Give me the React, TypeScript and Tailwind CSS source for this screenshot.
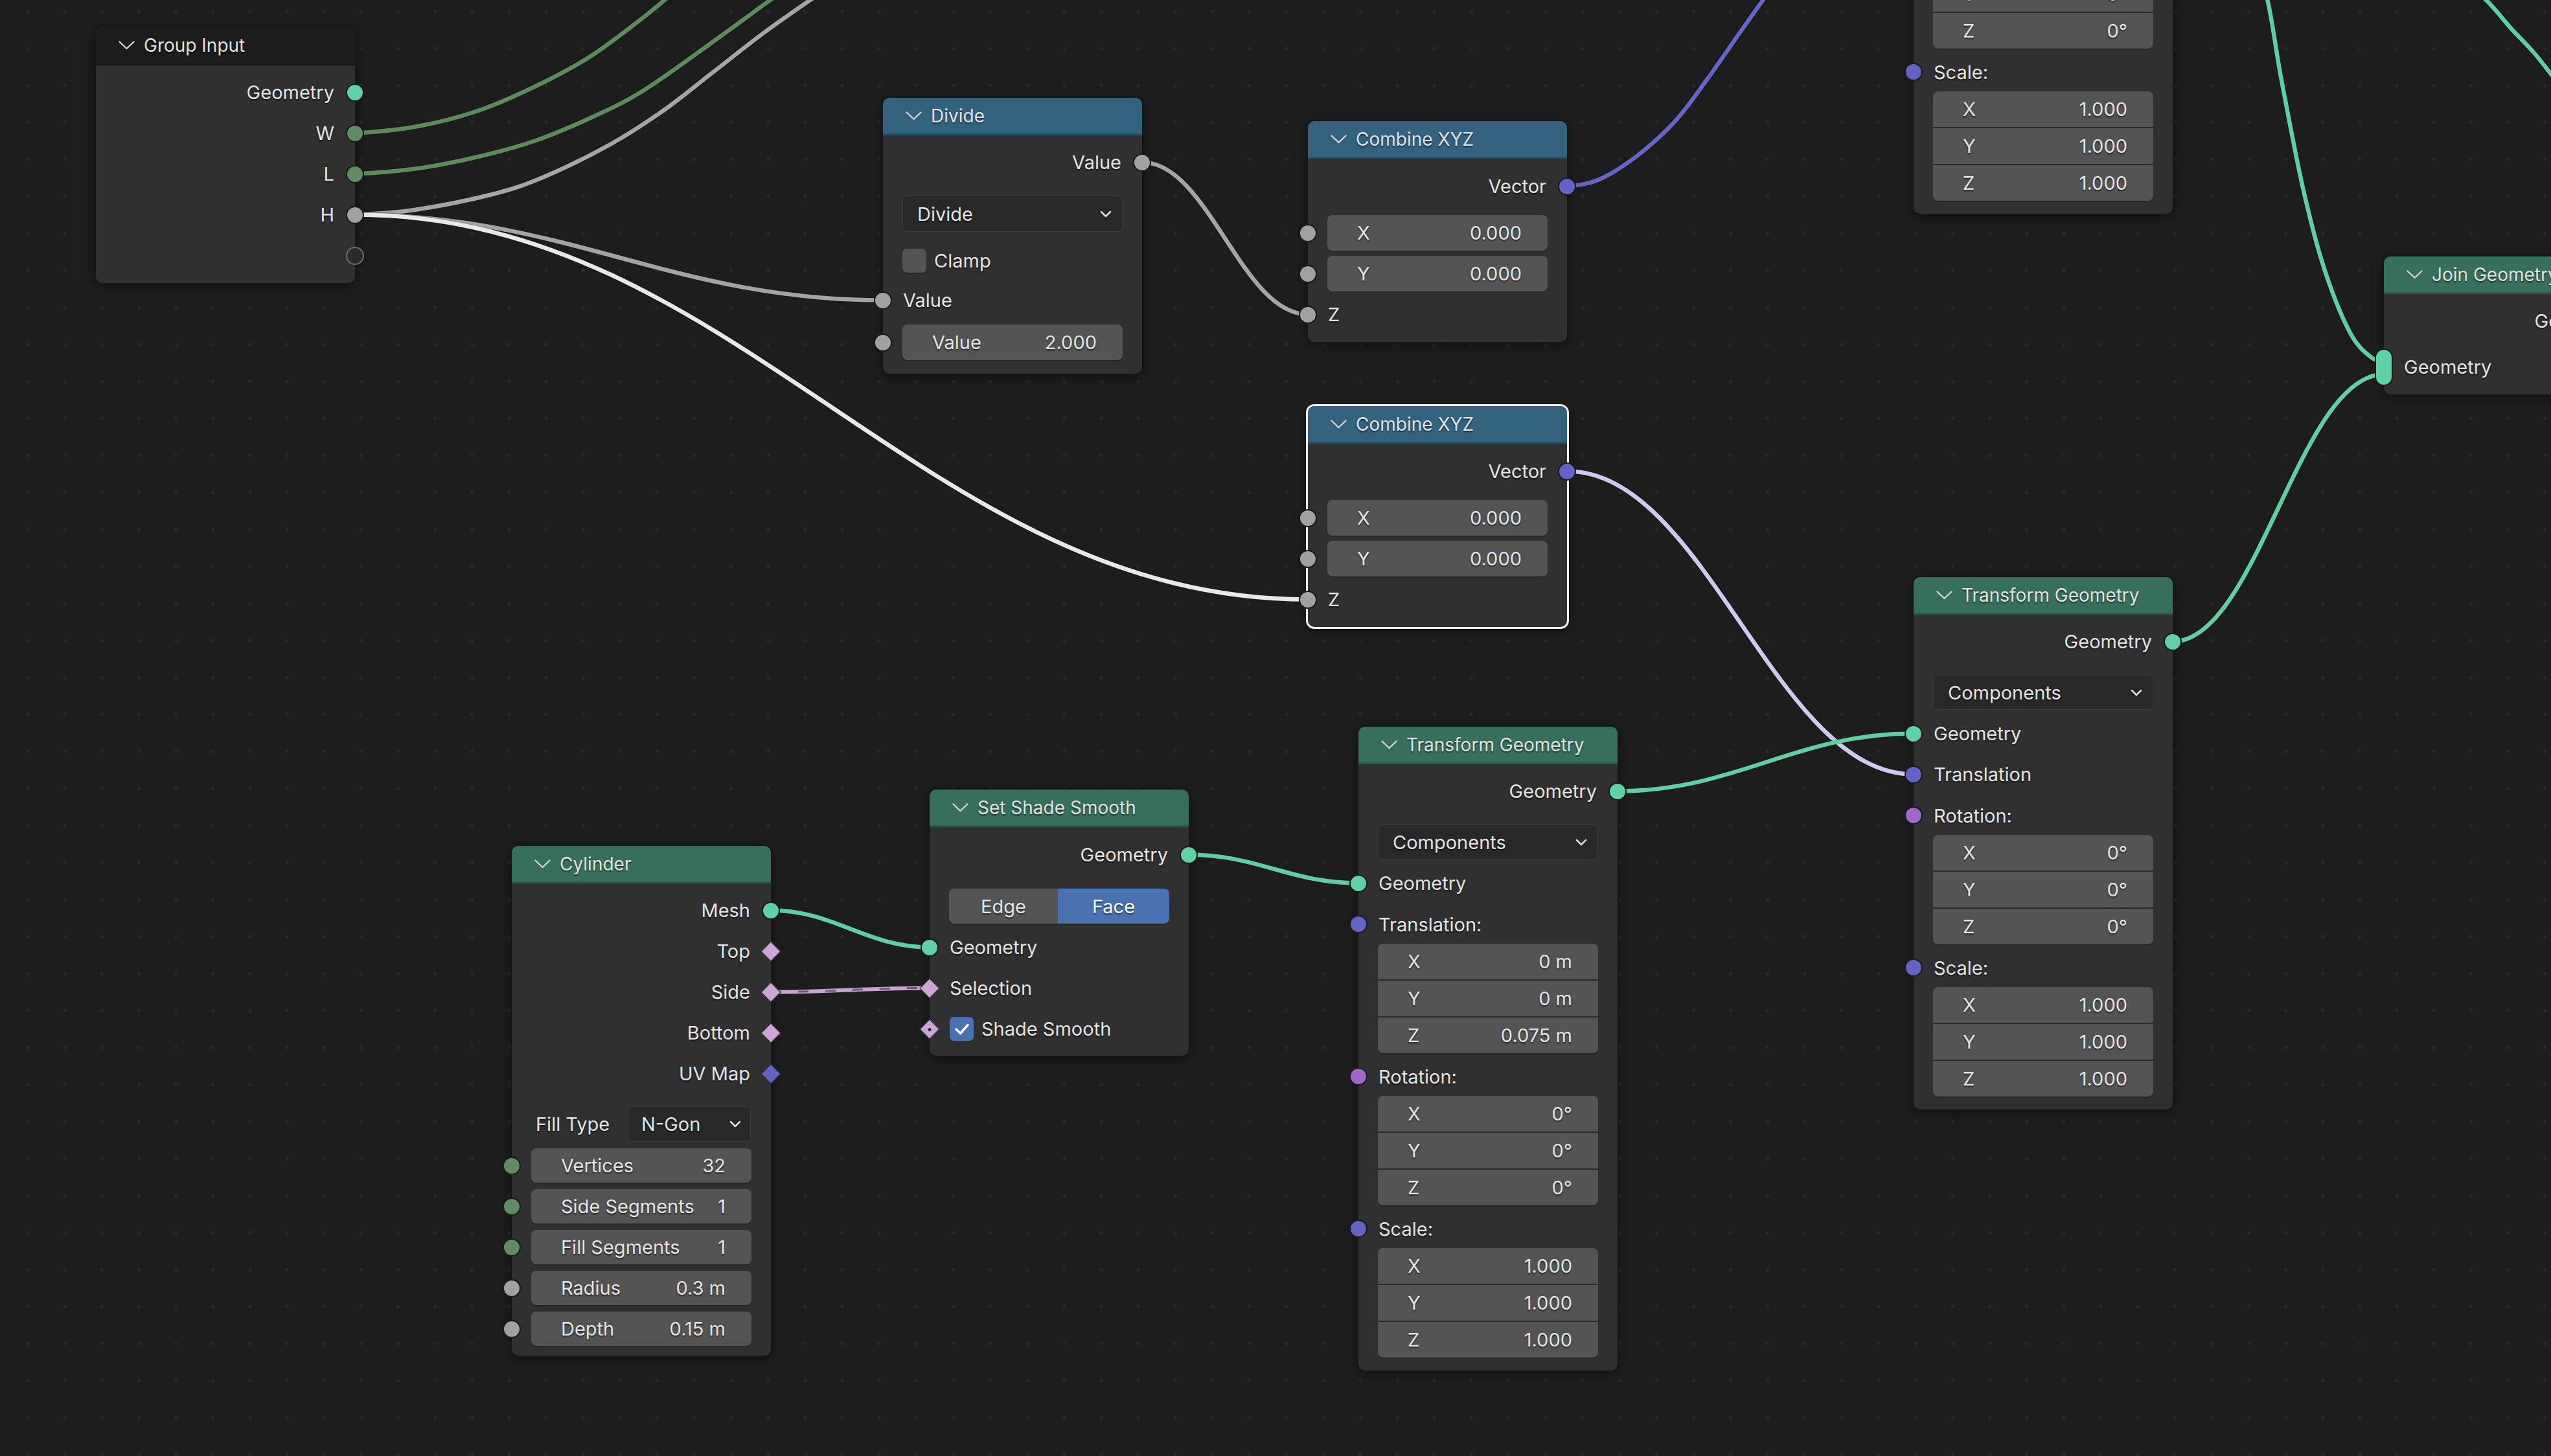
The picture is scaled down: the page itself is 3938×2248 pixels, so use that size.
import React from "react";

type ST = "geo" | "int" | "float" | "vec" | "rot" | "bool" | "boolDot" | "vecD" | "empty" | "multi";

const circleBg: Record<string, string> = {
  geo: "bg-[#5ed1a6]",
  int: "bg-[#5f8c60]",
  float: "bg-[#a1a1a1]",
  vec: "bg-[#6363c7]",
  rot: "bg-[#a066c8]",
};

function Socket({ t, side }: { t: ST; side: "l" | "r" }) {
  if (t === "bool" || t === "boolDot" || t === "vecD") {
    const pos = side === "l" ? "left-[-16px]" : "right-[-16px]";
    const bg = t === "vecD" ? "bg-[#6363c7]" : "bg-[#cca6d6]";
    return (
      <div className={`absolute ${pos} top-1/2 -translate-y-1/2 w-[32px] h-[32px] flex items-center justify-center`}>
        <div className={`w-[22px] h-[22px] rotate-45 ${bg} border-[1.5px] border-[#1a1a1a] flex items-center justify-center`}>
          {t === "boolDot" && <div className="w-[5px] h-[5px] rounded-full bg-[#2a2a2a]" />}
        </div>
      </div>
    );
  }
  if (t === "multi") {
    return (
      <div className="absolute left-[-14px] top-1/2 -translate-y-1/2 w-[28px] h-[58px] rounded-full bg-[#5ed1a6] border-[2.5px] border-[#1a1a1a]" />
    );
  }
  const pos = side === "l" ? "left-[-14px]" : "right-[-14px]";
  if (t === "empty") {
    return (
      <div className={`absolute ${pos} top-1/2 -translate-y-1/2 w-[28px] h-[28px] rounded-full bg-[#2a2a2a] border-[2.5px] border-[#6a6a6a]`} />
    );
  }
  return (
    <div className={`absolute ${pos} top-1/2 -translate-y-1/2 w-[28px] h-[28px] rounded-full ${circleBg[t]} border-[2.5px] border-[#1a1a1a]`} />
  );
}

function Chev() {
  return (
    <svg width="25" height="14" viewBox="0 0 25 14" className="shrink-0">
      <polyline points="1.5,1.5 12.5,12 23.5,1.5" fill="none" stroke="#d4d4d4" strokeWidth="2.4" strokeLinecap="round" strokeLinejoin="round" />
    </svg>
  );
}

function SmallChev() {
  return (
    <svg width="18" height="11" viewBox="0 0 18 11" className="shrink-0">
      <polyline points="2,2 9,9 16,2" fill="none" stroke="#dcdcdc" strokeWidth="2.5" strokeLinecap="round" strokeLinejoin="round" />
    </svg>
  );
}

function Node({
  pos,
  title,
  head,
  sel,
  headH = "h-[58px]",
  bodyCls = "",
  children,
}: {
  pos: string;
  title: string;
  head: "blue" | "green" | "dark";
  sel?: boolean;
  headH?: string;
  bodyCls?: string;
  children: React.ReactNode;
}) {
  const headCls =
    head === "blue"
      ? "bg-[#33627f] border-[#284f67]"
      : head === "green"
      ? "bg-[#376f5d] border-[#2b5a4b]"
      : "bg-[#1c1c1c] border-[#151515]";
  const shadow = sel
    ? "shadow-[0_0_0_3px_#f0f0f0,0_4px_18px_rgba(0,0,0,0.55)]"
    : "shadow-[0_0_0_2px_#161616,0_4px_18px_rgba(0,0,0,0.5)]";
  return (
    <div className={`absolute w-[400px] ${pos} rounded-[10px] bg-[#303030] ${shadow}`}>
      <div className={`${headH} rounded-t-[10px] border-b-[3px] ${headCls} flex items-center pl-[35px] gap-[14px] text-[28px] text-[#e2e2e2]`}>
        <Chev />
        <span className="whitespace-nowrap">{title}</span>
      </div>
      <div className={`flex flex-col ${bodyCls}`}>{children}</div>
    </div>
  );
}

function Out({ label, t, cls = "" }: { label: string; t: ST; cls?: string }) {
  return (
    <div className={`relative h-[63px] flex items-center justify-end pr-[32px] ${cls}`}>
      <span className="whitespace-nowrap">{label}</span>
      <Socket t={t} side="r" />
    </div>
  );
}

function In({ label, t, h = "h-[63px]", cls = "" }: { label: string; t: ST; h?: string; cls?: string }) {
  return (
    <div className={`relative ${h} flex items-center pl-[31px] ${cls}`}>
      <span className="whitespace-nowrap">{label}</span>
      <Socket t={t} side="l" />
    </div>
  );
}

function Field({
  label,
  value,
  t,
  rowH = "h-[63px]",
  fH = "h-[54px]",
  cls = "",
}: {
  label: string;
  value: string;
  t?: ST;
  rowH?: string;
  fH?: string;
  cls?: string;
}) {
  return (
    <div className={`relative ${rowH} flex items-center pl-[30px] pr-[30px] ${cls}`}>
      {t && <Socket t={t} side="l" />}
      <div className={`flex-1 ${fH} rounded-[8px] bg-[#545454] shadow-[0_2px_0_#262626] flex items-center justify-between pl-[46px] pr-[40px]`}>
        <span className="whitespace-nowrap">{label}</span>
        <span className="whitespace-nowrap">{value}</span>
      </div>
    </div>
  );
}

function Vec({ vals }: { vals: string[] }) {
  const axes = ["X", "Y", "Z"];
  return (
    <div className="mx-[30px] flex flex-col gap-[2px] rounded-[8px] overflow-hidden bg-[#2a2a2a] shadow-[0_2px_0_#262626]">
      {axes.map((a, i) => (
        <div key={a} className="h-[55px] bg-[#545454] flex items-center justify-between pl-[46px] pr-[40px]">
          <span>{a}</span>
          <span className="whitespace-nowrap">{vals[i]}</span>
        </div>
      ))}
    </div>
  );
}

function Drop({ label, cls }: { label: string; cls: string }) {
  return (
    <div className={`mx-[30px] ${cls} rounded-[8px] bg-[#282828] border-[1.5px] border-[#3b3b3b] flex items-center justify-between pl-[22px] pr-[16px]`}>
      <span>{label}</span>
      <SmallChev />
    </div>
  );
}

function TransformNode({ pos, connectedTranslation, trans }: { pos: string; connectedTranslation: boolean; trans?: string[] }) {
  return (
    <Node pos={pos} title="Transform Geometry" head="green" bodyCls="pt-[10px] pb-[20px]">
      <Out label="Geometry" t="geo" />
      <Drop label="Components" cls="mt-[20px] h-[54px]" />
      <In label="Geometry" t="geo" cls="mt-[5px]" />
      {connectedTranslation ? (
        <In label="Translation" t="vec" />
      ) : (
        <>
          <In label="Translation:" t="vec" h="h-[60px]" cls="mt-[2px]" />
          <Vec vals={trans || ["0 m", "0 m", "0 m"]} />
        </>
      )}
      <In label="Rotation:" t="rot" h="h-[60px]" cls={connectedTranslation ? "mt-[2px]" : "mt-[6px]"} />
      <Vec vals={["0°", "0°", "0°"]} />
      <In label="Scale:" t="vec" h="h-[60px]" cls="mt-[6px]" />
      <Vec vals={["1.000", "1.000", "1.000"]} />
    </Node>
  );
}

function bz(x0: number, y0: number, x1: number, y1: number, f = 0.4) {
  const d = Math.abs(x1 - x0) * f;
  return `M${x0} ${y0} C${x0 + d} ${y0} ${x1 - d} ${y1} ${x1} ${y1}`;
}

function cr(pts: number[][]) {
  let d = `M${pts[0][0]} ${pts[0][1]}`;
  for (let i = 0; i < pts.length - 1; i++) {
    const p1 = pts[i];
    const p2 = pts[i + 1];
    const p0 = i === 0 ? [p1[0] - (p2[0] - p1[0]), p1[1]] : pts[i - 1];
    const p3 = pts[i + 2] || p2;
    const c1 = [p1[0] + (p2[0] - p0[0]) / 6, p1[1] + (p2[1] - p0[1]) / 6];
    const c2 = [p2[0] - (p3[0] - p1[0]) / 6, p2[1] - (p3[1] - p1[1]) / 6];
    d += ` C${c1[0]} ${c1[1]} ${c2[0]} ${c2[1]} ${p2[0]} ${p2[1]}`;
  }
  return d;
}

const TEAL = "#5dcfa3";

const wires: { d: string; c: string }[] = [
  { d: cr([[548, 205.5], [645, 195], [738, 171], [827, 133], [910, 88], [993, 27], [1040, -12]]), c: "#5d8a5c" },
  { d: cr([[548, 268.5], [645, 260], [738, 242], [827, 217], [916, 180], [993, 140], [1100, 65], [1200, -8]]), c: "#5d8a5c" },
  { d: cr([[548, 331.5], [640, 324], [760, 300], [840, 273], [942, 223], [1025, 170], [1100, 112], [1180, 50], [1268, -12]]), c: "#a5a5a5" },
  { d: bz(548, 331.5, 1363, 463.5), c: "#a3a3a3" },
  { d: bz(548, 331.5, 2019, 925.5), c: "#e8e8e8" },
  { d: bz(1763, 250.5, 2019, 485.5), c: "#a5a5a5" },
  { d: cr([[2419, 287.5], [2469, 277], [2528, 240], [2586, 187], [2635, 123], [2684, 53], [2730, -12]]), c: "#6465c6" },
  { d: bz(2419, 727.5, 2954, 1195.5), c: "#cbcbef" },
  { d: bz(2497, 1221.5, 2954, 1132.5), c: TEAL },
  { d: bz(3354, 990.5, 3680, 578), c: TEAL },
  { d: cr([[3497, -12], [3522, 124], [3555, 290], [3588, 415], [3628, 514], [3661, 552], [3680, 556]]), c: TEAL },
  { d: cr([[3822, -12], [3880, 48], [3913, 83], [3950, 130]]), c: TEAL },
  { d: bz(1190, 1405.5, 1435, 1462.5), c: TEAL },
  { d: bz(1835, 1319.5, 2097, 1363.5), c: TEAL },
];

export default function App() {
  return (
    <div className="relative w-[3938px] h-[2248px] overflow-hidden bg-[#1d1d1d] [background-image:radial-gradient(circle,#282828_2.4px,transparent_3px)] [background-size:57.15px_57.15px] [background-position:14.5px_-11px] [font-family:Inter,sans-serif] text-[29px] leading-none text-[#e4e4e4] [text-shadow:0_2px_2px_rgba(0,0,0,0.55)]">
      <svg className="absolute left-0 top-0" width={3938} height={2248}>
        {wires.map((w, i) => (
          <g key={i}>
            <path d={w.d} fill="none" stroke="rgba(0,0,0,0.2)" strokeWidth={8.5} strokeLinecap="round" />
            <path d={w.d} fill="none" stroke={w.c} strokeWidth={6.5} strokeLinecap="round" />
          </g>
        ))}
        <path d={bz(1190, 1531.5, 1435, 1525.5)} fill="none" stroke="#c8a5d4" strokeWidth={6} />
        <path d={bz(1190, 1531.5, 1435, 1525.5)} fill="none" stroke="#6e5a75" strokeWidth={3} strokeDasharray="16 26" />
      </svg>

      {/* Group Input */}
      <Node pos="left-[148px] top-[41px]" title="Group Input" head="dark" headH="h-[60px]" bodyCls="pt-[10px] pb-[11px]">
        <Out label="Geometry" t="geo" />
        <Out label="W" t="int" />
        <Out label="L" t="int" />
        <Out label="H" t="float" />
        <Out label="" t="empty" />
      </Node>

      {/* Divide */}
      <Node pos="left-[1363px] top-[151px]" title="Divide" head="blue" bodyCls="pt-[10px] pb-[21px]">
        <Out label="Value" t="float" />
        <Drop label="Divide" cls="mt-[20px] h-[56px]" />
        <div className="mt-[24px] h-[40px] px-[30px] flex items-center gap-[12px]">
          <div className="w-[37px] h-[37px] rounded-[7px] bg-[#545454] shadow-[0_2px_0_#262626]" />
          <span>Clamp</span>
        </div>
        <In label="Value" t="float" cls="mt-[10px]" />
        <Field label="Value" value="2.000" t="float" rowH="h-[55px]" fH="h-[55px]" cls="mt-[6px]" />
      </Node>

      {/* Combine XYZ (top) */}
      <Node pos="left-[2019px] top-[187px]" title="Combine XYZ" head="blue" bodyCls="pt-[11px] pb-[11px]">
        <Out label="Vector" t="vec" />
        <Field label="X" value="0.000" t="float" fH="h-[55px]" cls="mt-[9px]" />
        <Field label="Y" value="0.000" t="float" fH="h-[55px]" />
        <In label="Z" t="float" />
      </Node>

      {/* Combine XYZ (selected) */}
      <Node pos="left-[2019px] top-[627px]" title="Combine XYZ" head="blue" sel bodyCls="pt-[11px] pb-[11px]">
        <Out label="Vector" t="vec" />
        <Field label="X" value="0.000" t="float" fH="h-[55px]" cls="mt-[9px]" />
        <Field label="Y" value="0.000" t="float" fH="h-[55px]" />
        <In label="Z" t="float" />
      </Node>

      {/* Transform Geometry (top, mostly off-screen) */}
      <TransformNode pos="left-[2954px] top-[-492px]" connectedTranslation />

      {/* Transform Geometry (right) */}
      <TransformNode pos="left-[2954px] top-[891px]" connectedTranslation />

      {/* Transform Geometry (middle) */}
      <TransformNode pos="left-[2097px] top-[1122px]" connectedTranslation={false} trans={["0 m", "0 m", "0.075 m"]} />

      {/* Join Geometry */}
      <Node pos="left-[3680px] top-[396px]" title="Join Geometry" head="green" bodyCls="pt-[10px] pb-[11px]">
        <Out label="Geometry" t="geo" />
        <In label="Geometry" t="multi" cls="mt-[8px]" />
      </Node>

      {/* Cylinder */}
      <Node pos="left-[790px] top-[1306px]" title="Cylinder" head="green" bodyCls="pt-[10px] pb-[10px]">
        <Out label="Mesh" t="geo" />
        <Out label="Top" t="bool" />
        <Out label="Side" t="bool" />
        <Out label="Bottom" t="bool" />
        <Out label="UV Map" t="vecD" />
        <div className="mt-[19px] h-[55px] pl-[37px] pr-[31px] flex items-center justify-between">
          <span>Fill Type</span>
          <div className="w-[190px] h-[55px] rounded-[8px] bg-[#282828] border-[1.5px] border-[#3b3b3b] flex items-center justify-between pl-[20px] pr-[14px]">
            <span>N-Gon</span>
            <SmallChev />
          </div>
        </div>
        <Field label="Vertices" value="32" t="int" fH="h-[53px]" cls="mt-[5px]" />
        <Field label="Side Segments" value="1" t="int" fH="h-[53px]" />
        <Field label="Fill Segments" value="1" t="int" fH="h-[53px]" />
        <Field label="Radius" value="0.3 m" t="float" fH="h-[53px]" />
        <Field label="Depth" value="0.15 m" t="float" fH="h-[53px]" />
      </Node>

      {/* Set Shade Smooth */}
      <Node pos="left-[1435px] top-[1219px]" title="Set Shade Smooth" head="green" bodyCls="pt-[11px] pb-[10px]">
        <Out label="Geometry" t="geo" />
        <div className="mt-[21px] h-[54px] mx-[30px] flex rounded-[8px] overflow-hidden shadow-[0_2px_0_#262626]">
          <div className="w-[168px] bg-[#545454] flex items-center justify-center">Edge</div>
          <div className="flex-1 bg-[#4a72b2] flex items-center justify-center text-white">Face</div>
        </div>
        <In label="Geometry" t="geo" cls="mt-[5px]" />
        <In label="Selection" t="bool" />
        <div className="relative h-[63px] flex items-center pl-[31px] gap-[12px]">
          <Socket t="boolDot" side="l" />
          <div className="w-[37px] h-[37px] rounded-[7px] bg-[#4a72b2] flex items-center justify-center">
            <svg width="24" height="20" viewBox="0 0 24 20">
              <polyline points="3,10 9.5,16.5 21,3.5" fill="none" stroke="#ffffff" strokeWidth="3.6" strokeLinecap="round" strokeLinejoin="round" />
            </svg>
          </div>
          <span>Shade Smooth</span>
        </div>
      </Node>
    </div>
  );
}
